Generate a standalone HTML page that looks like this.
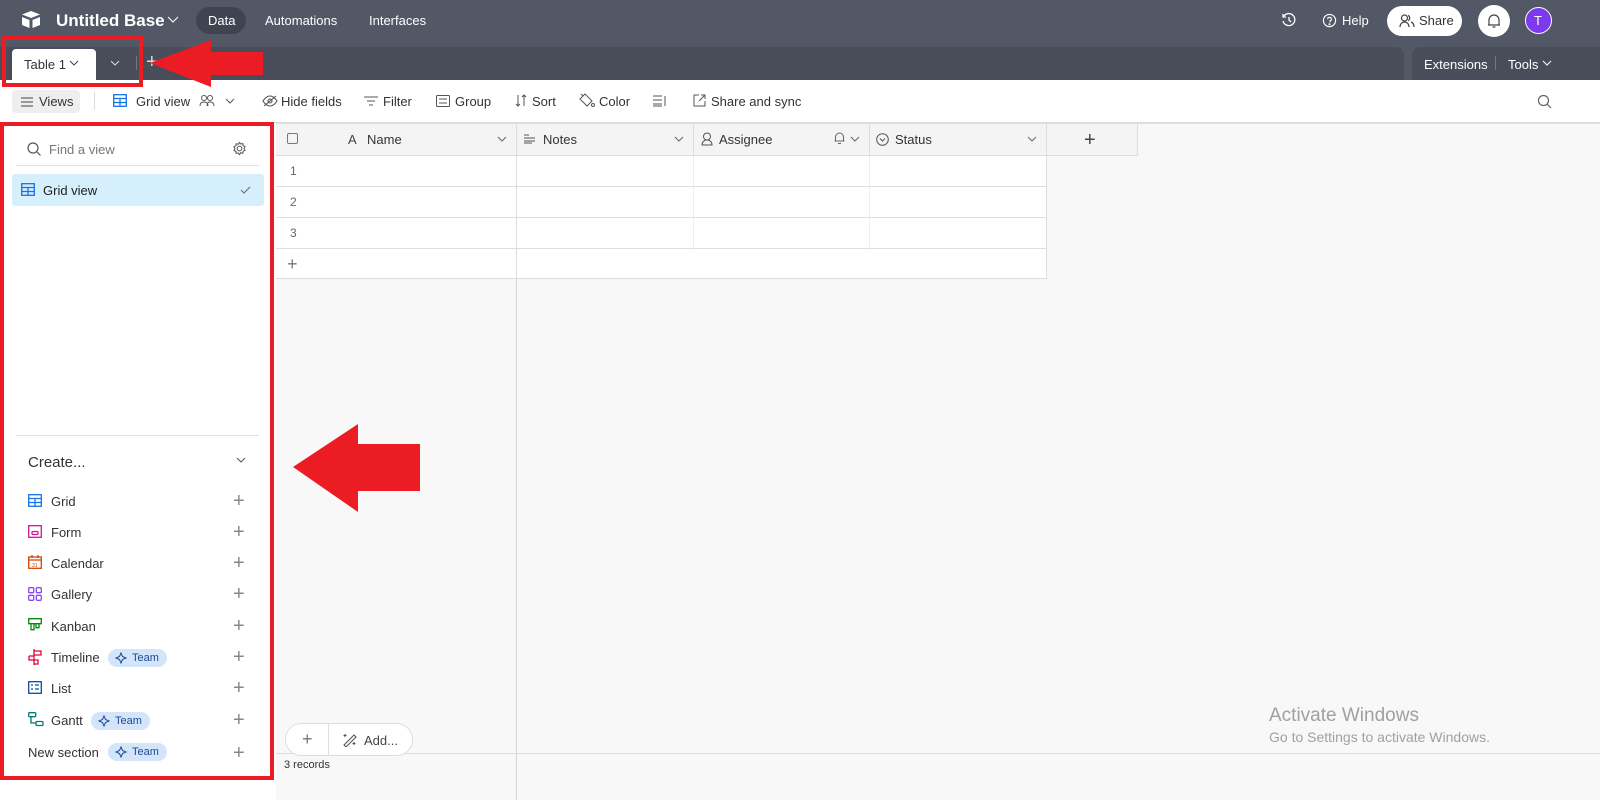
<!DOCTYPE html>
<html><head><meta charset="utf-8"><style>
*{box-sizing:border-box;margin:0;padding:0}
body{width:1600px;height:800px;overflow:hidden;font-family:"Liberation Sans",sans-serif;font-size:13px;color:#333;background:#f8f8f8;position:relative}
.abs{position:absolute}
.top{left:0;top:0;width:1600px;height:47px;background:#525866;color:#fff}
.tabs{left:0;top:47px;width:1600px;height:33px;background:#525866}
.tabbar{left:0;top:47px;width:1404px;height:33px;background:#484d59;border-radius:0 8px 0 0}
.tabbar2{left:1412px;top:47px;width:188px;height:33px;background:#484d59;border-radius:8px 0 0 0}
.tb{left:0;top:80px;width:1600px;height:43px;background:#fff;border-bottom:1px solid #ddd}
.t{position:absolute;white-space:nowrap}
svg{position:absolute}
.side{left:0;top:123px;width:274px;height:677px;background:#fff}
.hdr{position:absolute;top:0;height:32px;background:#f4f4f4;border-bottom:1px solid #ddd;border-right:1px solid #ddd}
.cell{position:absolute;height:31px;background:#fff;border-bottom:1px solid #ddd;border-right:1px solid #eee}
.team{position:absolute;height:18px;line-height:18px;background:#d4e5fb;color:#1a4a8e;border-radius:9px;font-size:11px;padding:0 8px 0 24px}
.plus{position:absolute;left:233px;color:#888;font-size:20px;font-weight:300;line-height:20px}
</style></head><body>
<div class="abs top">
 <svg style="left:20px;top:10px" width="22" height="20" viewBox="0 0 22 20"><path d="M11 1L20 4.5 11 8 2 4.5Z" fill="#fff"/><path d="M2 7v8l7.5 3V10Z" fill="#fff"/><path d="M12.5 10v8l7.5-3V7Z" fill="#fff"/></svg>
 <div class="t" style="left:56px;top:11px;font-size:17px;font-weight:bold">Untitled Base</div>
 <svg style="left:167px;top:16px" width="12" height="8"><path d="M1 1l5 5 5-5" stroke="#fff" fill="none"/></svg>
 <div class="abs" style="left:196px;top:7px;width:50px;height:27px;background:#3f4450;border-radius:14px"></div>
 <div class="t" style="left:208px;top:13px">Data</div>
 <div class="t" style="left:265px;top:13px">Automations</div>
 <div class="t" style="left:369px;top:13px">Interfaces</div>
 <svg style="left:1281px;top:12px" width="16" height="16" viewBox="0 0 16 16" fill="none" stroke="#fff" stroke-width="1.3"><path d="M3 4a6 6 0 1 1-1 5"/><path d="M2 2v3h3"/><path d="M8 5v3l2 2"/></svg>
 <svg style="left:1322px;top:13px" width="15" height="15" viewBox="0 0 16 16" fill="none" stroke="#fff" stroke-width="1.2"><circle cx="8" cy="8" r="6.5"/><path d="M6 6.5a2 2 0 1 1 2.5 2V10"/><circle cx="8" cy="12" r=".5"/></svg>
 <div class="t" style="left:1342px;top:13px">Help</div>
 <div class="abs" style="left:1387px;top:6px;width:75px;height:30px;background:#fff;border-radius:15px"></div>
 <svg style="left:1399px;top:14px" width="16" height="14" viewBox="0 0 16 14" fill="none" stroke="#444" stroke-width="1.2"><circle cx="5.5" cy="4" r="3"/><path d="M1 13c0-3 2-5 4.5-5S10 10 10 13"/><path d="M9 1.3a3 3 0 0 1 0 5.4M12 8c2 .7 3 2.5 3 5"/></svg>
 <div class="t" style="left:1419px;top:13px;color:#333">Share</div>
 <div class="abs" style="left:1478px;top:5px;width:32px;height:32px;background:#fff;border-radius:16px"></div>
 <svg style="left:1487px;top:13px" width="14" height="16" viewBox="0 0 14 16" fill="none" stroke="#444" stroke-width="1.2"><path d="M2 12V7a5 5 0 0 1 10 0v5H1h12"/><path d="M5.5 14h3"/></svg>
 <div class="abs" style="left:1525px;top:7px;width:27px;height:27px;background:#7c39ed;border-radius:14px;border:1px solid #fff"></div>
 <div class="t" style="left:1534px;top:13px;font-size:13px">T</div>
</div>
<div class="abs tabs"></div>
<div class="abs tabbar"></div>
<div class="abs tabbar2"></div>
<div class="abs" style="left:12px;top:49px;width:84px;height:31px;background:#fff;border-radius:4px 4px 0 0"></div>
<div class="t" style="left:24px;top:57px;color:#333">Table 1</div>
<svg style="left:69px;top:60px" width="10" height="6"><path d="M1 1l4 4 4-4" stroke="#444" fill="none"/></svg>
<svg style="left:110px;top:60px" width="10" height="6"><path d="M1 1l4 4 4-4" stroke="#ddd" fill="none"/></svg>
<div class="abs" style="left:136px;top:56px;width:1px;height:14px;background:#777"></div>
<div class="t" style="left:146px;top:51px;color:#ddd;font-size:20px">+</div>
<div class="t" style="left:1424px;top:57px;color:#fff">Extensions</div>
<div class="abs" style="left:1495px;top:56px;width:1px;height:14px;background:#777"></div>
<div class="t" style="left:1508px;top:57px;color:#fff">Tools</div>
<svg style="left:1542px;top:60px" width="10" height="6"><path d="M1 1l4 4 4-4" stroke="#fff" fill="none"/></svg>

<div class="abs tb">
 <div class="abs" style="left:12px;top:10px;width:68px;height:23px;background:#eee;border-radius:4px"></div>
 <svg style="left:21px;top:17px" width="12" height="10"><path d="M0 1h12M0 5h12M0 9h12" stroke="#444"/></svg>
 <div class="t" style="left:39px;top:14px;color:#333">Views</div>
 <div class="abs" style="left:94px;top:12px;width:1px;height:18px;background:#ddd"></div>
 <svg style="left:113px;top:14px" width="14" height="13" viewBox="0 0 14 13" fill="none" stroke="#1772e8" stroke-width="1.3"><rect x=".7" y=".7" width="12.6" height="11.6"/><path d="M.7 4.5h12.6M.7 8.5h12.6M7 4.5v7.8"/></svg>
 <div class="t" style="left:136px;top:14px;color:#333">Grid view</div>
 <svg style="left:199px;top:14px" width="16" height="13" viewBox="0 0 16 13" fill="none" stroke="#555" stroke-width="1"><circle cx="5" cy="4" r="2.5"/><circle cx="11" cy="4" r="2.5"/><path d="M1 12c0-3 2-4 4-4s4 1 4 4M8 12c0-3 1-4 3-4s4 1 4 4"/></svg>
 <svg style="left:225px;top:18px" width="10" height="6"><path d="M1 1l4 4 4-4" stroke="#555" fill="none"/></svg>
 <svg style="left:262px;top:15px" width="16" height="12" viewBox="0 0 16 12" fill="none" stroke="#555" stroke-width="1.1"><path d="M1 6s3-5 7-5 7 5 7 5-3 5-7 5-7-5-7-5z"/><circle cx="8" cy="6" r="2"/><path d="M2 11L14 1"/></svg>
 <div class="t" style="left:281px;top:14px">Hide fields</div>
 <svg style="left:364px;top:16px" width="14" height="10"><path d="M0 1h14M3 5h8M5 9h4" stroke="#555"/></svg>
 <div class="t" style="left:383px;top:14px">Filter</div>
 <svg style="left:436px;top:15px" width="14" height="12" fill="none" stroke="#555"><rect x=".5" y=".5" width="13" height="11" rx="1"/><path d="M3 4h8M3 8h8"/></svg>
 <div class="t" style="left:455px;top:14px">Group</div>
 <svg style="left:515px;top:14px" width="12" height="13" fill="none" stroke="#555"><path d="M3 1v11M1 10l2 2 2-2M9 12V1M7 3l2-2 2 2"/></svg>
 <div class="t" style="left:532px;top:14px">Sort</div>
 <svg style="left:579px;top:13px" width="16" height="15" fill="none" stroke="#555"><path d="M6 1l7 7-5 5-7-7z M4 3l-2-2"/><circle cx="14" cy="12" r="1.5"/></svg>
 <div class="t" style="left:599px;top:14px">Color</div>
 <svg style="left:653px;top:15px" width="14" height="12" fill="none" stroke="#555"><path d="M0 1h9M0 5h9M0 9h9M0 11h9M12 1v10"/></svg>
 <svg style="left:693px;top:14px" width="13" height="13" fill="none" stroke="#555"><path d="M6 1H1v11h11V7M8 1h4v4M12 1L6 7"/></svg>
 <div class="t" style="left:711px;top:14px">Share and sync</div>
 <svg style="left:1537px;top:14px" width="15" height="15" fill="none" stroke="#666" stroke-width="1.2"><circle cx="6.5" cy="6.5" r="5"/><path d="M10 10l4 4"/></svg>
</div>

<div class="abs side">
 <svg style="left:27px;top:19px" width="14" height="14" fill="none" stroke="#555" stroke-width="1.2"><circle cx="6" cy="6" r="5"/><path d="M10 10l3.5 3.5"/></svg>
 <div class="t" style="left:49px;top:19px;color:#777">Find a view</div>
 <svg style="left:232px;top:18px" width="15" height="15" viewBox="0 0 16 16" fill="none" stroke="#555" stroke-width="1.1"><circle cx="8" cy="8" r="2.5"/><path d="M8 1.5l1.3 1.8 2.2-.6.4 2.2 2 1-1 2 1 2-2 1-.4 2.2-2.2-.6L8 14.5l-1.3-1.8-2.2.6-.4-2.2-2-1 1-2-1-2 2-1 .4-2.2 2.2.6z"/></svg>
 <div class="abs" style="left:16px;top:42px;width:243px;height:1px;background:#e2e2e2"></div>
 <div class="abs" style="left:12px;top:51px;width:252px;height:32px;background:#d6effc;border-radius:3px"></div>
 <svg style="left:21px;top:60px" width="14" height="13" viewBox="0 0 14 13" fill="none" stroke="#1772e8" stroke-width="1.3"><rect x=".7" y=".7" width="12.6" height="11.6"/><path d="M.7 4.5h12.6M.7 8.5h12.6M7 4.5v7.8"/></svg>
 <div class="t" style="left:43px;top:60px;color:#222">Grid view</div>
 <svg style="left:240px;top:63px" width="11" height="8"><path d="M1 4l3 3 6-6" stroke="#666" fill="none"/></svg>
 <div class="abs" style="left:16px;top:312px;width:243px;height:1px;background:#e2e2e2"></div>
 <div class="t" style="left:28px;top:331px;font-size:15px;color:#333">Create...</div>
 <svg style="left:236px;top:334px" width="10" height="6"><path d="M1 1l4 4 4-4" stroke="#555" fill="none"/></svg>

 <svg style="left:28px;top:371px" width="14" height="13" fill="none" stroke="#1772e8" stroke-width="1.3"><rect x=".7" y=".7" width="12.6" height="11.6"/><path d="M.7 4.5h12.6M.7 8.5h12.6M7 4.5v7.8"/></svg>
 <div class="t" style="left:51px;top:371px">Grid</div><div class="plus" style="top:368px">+</div>
 <svg style="left:28px;top:402px" width="14" height="13" fill="none" stroke="#d5149b" stroke-width="1.3"><rect x=".7" y=".7" width="12.6" height="11.6"/><rect x="4" y="6.5" width="6" height="3" rx="1"/></svg>
 <div class="t" style="left:51px;top:402px">Form</div><div class="plus" style="top:399px">+</div>
 <svg style="left:28px;top:432px" width="14" height="14" fill="none" stroke="#d54401" stroke-width="1.3"><rect x=".7" y="2" width="12.6" height="11.3"/><path d="M.7 5h12.6M4 0v3M10 0v3"/><text x="4" y="12" font-size="5" fill="#d54401" stroke="none">31</text></svg>
 <div class="t" style="left:51px;top:433px">Calendar</div><div class="plus" style="top:430px">+</div>
 <svg style="left:28px;top:464px" width="14" height="14" fill="none" stroke="#8b46ff" stroke-width="1.3"><rect x=".7" y=".7" width="5" height="5" rx="1"/><rect x="8.3" y=".7" width="5" height="5" rx="1"/><rect x=".7" y="8.3" width="5" height="5" rx="1"/><rect x="8.3" y="8.3" width="5" height="5" rx="1"/></svg>
 <div class="t" style="left:51px;top:464px">Gallery</div><div class="plus" style="top:461px">+</div>
 <svg style="left:28px;top:495px" width="14" height="14" fill="none" stroke="#048a0e" stroke-width="1.3"><path d="M.7.7h12.6v5H.7zM3 5.7v6h3v-6M8 5.7v4h3v-4"/></svg>
 <div class="t" style="left:51px;top:496px">Kanban</div><div class="plus" style="top:493px">+</div>
 <svg style="left:28px;top:526px" width="15" height="16" fill="none" stroke="#dc043b" stroke-width="1.3"><path d="M6 0v16M6 2h7v4H6M1 7h5M6 11h4v4H6M1 7v4h5"/></svg>
 <div class="t" style="left:51px;top:527px">Timeline</div>
 <div class="team" style="left:108px;top:526px">Team</div>
 <svg style="left:115px;top:529px" width="12" height="12" fill="none" stroke="#1a4a8e"><path d="M6 1l1.5 3.5L11 6 7.5 7.5 6 11 4.5 7.5 1 6l3.5-1.5z"/></svg>
 <div class="plus" style="top:524px">+</div>
 <svg style="left:28px;top:558px" width="14" height="13" fill="none" stroke="#0f4c9c" stroke-width="1.3"><rect x=".7" y=".7" width="12.6" height="11.6"/><path d="M3 4h2M7 4h4M3 8h2M7 8h4"/></svg>
 <div class="t" style="left:51px;top:558px">List</div><div class="plus" style="top:555px">+</div>
 <svg style="left:28px;top:589px" width="16" height="15" fill="none" stroke="#047b70" stroke-width="1.3"><rect x=".7" y=".7" width="7" height="4" rx="1"/><rect x="8" y="9.5" width="7" height="4" rx="1"/><path d="M3 5v6h5"/></svg>
 <div class="t" style="left:51px;top:590px">Gantt</div>
 <div class="team" style="left:91px;top:589px">Team</div>
 <svg style="left:98px;top:592px" width="12" height="12" fill="none" stroke="#1a4a8e"><path d="M6 1l1.5 3.5L11 6 7.5 7.5 6 11 4.5 7.5 1 6l3.5-1.5z"/></svg>
 <div class="plus" style="top:587px">+</div>
 <div class="t" style="left:28px;top:622px">New section</div>
 <div class="team" style="left:108px;top:620px">Team</div>
 <svg style="left:115px;top:623px" width="12" height="12" fill="none" stroke="#1a4a8e"><path d="M6 1l1.5 3.5L11 6 7.5 7.5 6 11 4.5 7.5 1 6l3.5-1.5z"/></svg>
 <div class="plus" style="top:620px">+</div>
</div>

<div class="abs" style="left:274px;top:123px;width:2px;height:677px;background:#fff"></div>
<div class="abs" style="left:516px;top:123px;width:1px;height:677px;background:#d5d5d5"></div>
<div class="abs" style="left:276px;top:123px;width:1324px;height:1px;background:#ddd"></div>
<div class="hdr" style="left:276px;top:124px;width:241px"></div>
<div class="hdr" style="left:517px;top:124px;width:177px"></div>
<div class="hdr" style="left:694px;top:124px;width:176px"></div>
<div class="hdr" style="left:870px;top:124px;width:177px"></div>
<div class="hdr" style="left:1047px;top:124px;width:91px"></div>
<div class="abs" style="left:287px;top:133px;width:11px;height:11px;border:1px solid #777;border-radius:2px"></div>
<div class="t" style="left:348px;top:132px;color:#444">A</div>
<div class="t" style="left:367px;top:132px">Name</div>
<svg style="left:497px;top:136px" width="10" height="6"><path d="M1 1l4 4 4-4" stroke="#666" fill="none"/></svg>
<svg style="left:524px;top:134px" width="12" height="10"><path d="M0 1h5M0 4h11M0 7h11M0 9h8" stroke="#555"/></svg>
<div class="t" style="left:543px;top:132px">Notes</div>
<svg style="left:674px;top:136px" width="10" height="6"><path d="M1 1l4 4 4-4" stroke="#666" fill="none"/></svg>
<svg style="left:701px;top:132px" width="12" height="14" fill="none" stroke="#555"><circle cx="6" cy="4.5" r="3.5"/><path d="M1 13c0-3 2-5 5-5s5 2 5 5z"/></svg>
<div class="t" style="left:719px;top:132px">Assignee</div>
<svg style="left:834px;top:131px" width="11" height="14" fill="none" stroke="#666"><path d="M1.5 10V6a4 4 0 0 1 8 0v4H.5h10M4 12.5h3"/></svg>
<svg style="left:850px;top:136px" width="10" height="6"><path d="M1 1l4 4 4-4" stroke="#666" fill="none"/></svg>
<svg style="left:876px;top:133px" width="13" height="13" fill="none" stroke="#555"><circle cx="6.5" cy="6.5" r="5.8"/><path d="M4 5.5l2.5 2.5 2.5-2.5"/></svg>
<div class="t" style="left:895px;top:132px">Status</div>
<svg style="left:1027px;top:136px" width="10" height="6"><path d="M1 1l4 4 4-4" stroke="#666" fill="none"/></svg>
<div class="t" style="left:1084px;top:129px;font-size:20px;color:#444">+</div>
<div class="cell" style="left:276px;top:156px;width:241px;border-right:1px solid #ddd"></div>
<div class="cell" style="left:517px;top:156px;width:177px"></div><div class="cell" style="left:694px;top:156px;width:176px"></div><div class="cell" style="left:870px;top:156px;width:177px;border-right:1px solid #ddd"></div>
<div class="cell" style="left:276px;top:187px;width:241px;border-right:1px solid #ddd"></div>
<div class="cell" style="left:517px;top:187px;width:177px"></div><div class="cell" style="left:694px;top:187px;width:176px"></div><div class="cell" style="left:870px;top:187px;width:177px;border-right:1px solid #ddd"></div>
<div class="cell" style="left:276px;top:218px;width:241px;border-right:1px solid #ddd"></div>
<div class="cell" style="left:517px;top:218px;width:177px"></div><div class="cell" style="left:694px;top:218px;width:176px"></div><div class="cell" style="left:870px;top:218px;width:177px;border-right:1px solid #ddd"></div>
<div class="cell" style="left:276px;top:249px;width:241px;height:30px;border-right:1px solid #ddd"></div>
<div class="cell" style="left:517px;top:249px;width:530px;height:30px;border-right:1px solid #ddd"></div>
<div class="t" style="left:290px;top:164px;color:#666;font-size:12px">1</div>
<div class="t" style="left:290px;top:195px;color:#666;font-size:12px">2</div>
<div class="t" style="left:290px;top:226px;color:#666;font-size:12px">3</div>
<div class="t" style="left:287px;top:254px;color:#777;font-size:18px">+</div>
<div class="abs" style="left:276px;top:753px;width:1324px;height:1px;background:#ddd"></div>
<div class="abs" style="left:285px;top:723px;width:128px;height:33px;background:#fff;border:1px solid #ddd;border-radius:17px"></div>
<div class="abs" style="left:328px;top:724px;width:1px;height:31px;background:#ddd"></div>
<div class="t" style="left:302px;top:729px;color:#777;font-size:18px">+</div>
<svg style="left:342px;top:732px" width="16" height="15" fill="none" stroke="#555" stroke-width="1.1"><path d="M2 13L12 3l2 2L4 15z"/><path d="M3 2v3M1.5 3.5h3M12 10v3M10.5 11.5h3"/></svg>
<div class="t" style="left:364px;top:733px;color:#444">Add...</div>
<div class="t" style="left:284px;top:759px;font-size:11px;color:#333">3 records</div>
<div class="t" style="left:1269px;top:705px;font-size:19px;color:#a0a0a0">Activate Windows</div>
<div class="t" style="left:1269px;top:729px;font-size:14px;color:#a0a0a0">Go to Settings to activate Windows.</div>
<svg style="left:0;top:0" width="1600" height="800">
 <rect x="4" y="38" width="137" height="47" fill="none" stroke="#ec1c24" stroke-width="4"/>
 <rect x="2" y="124" width="270" height="654" fill="none" stroke="#ec1c24" stroke-width="4"/>
 <polygon points="150,63 211,40 211,52 263,52 263,75 211,75 211,87" fill="#ec1c24"/>
 <polygon points="293,467 358,424 358,444 420,444 420,491 358,491 358,512" fill="#ec1c24"/>
</svg>
</body></html>
